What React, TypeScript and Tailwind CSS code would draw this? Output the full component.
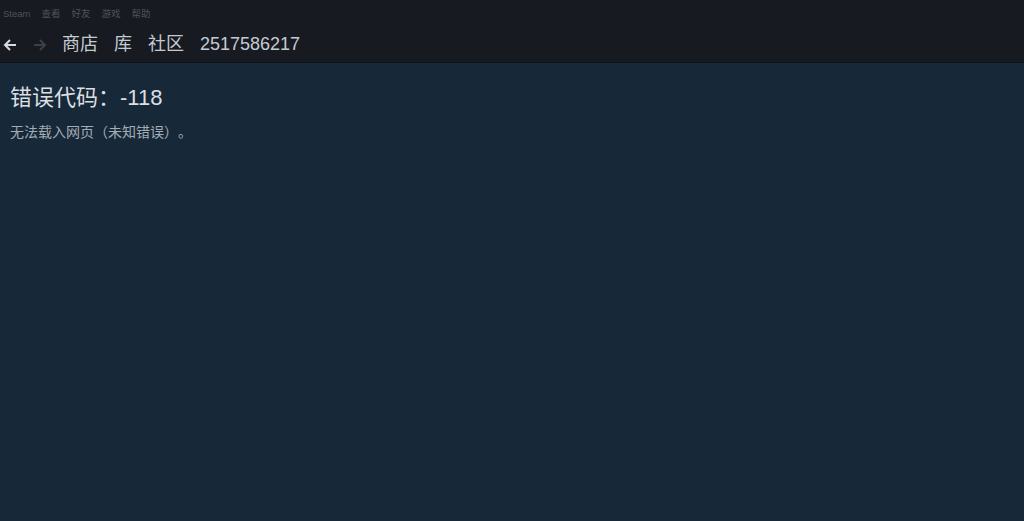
const cjk = "font-['Arial','Liberation_Sans','Noto_Sans_CJK_SC',sans-serif]"

const menu = ["Steam", "查看", "好友", "游戏", "帮助"]
const tabs = ["商店", "库", "社区", "2517586217"]

function Arrow({ dir, className }: { dir: "left" | "right"; className?: string }) {
  return (
    <svg width="14" height="14" viewBox="0 0 14 14" className={className}>
      {dir === "left" ? (
        <path d="M13 7H2M7 2L2 7l5 5" fill="none" stroke="currentColor" strokeWidth="2" />
      ) : (
        <path d="M1 7h11M7 2l5 5-5 5" fill="none" stroke="currentColor" strokeWidth="2" />
      )}
    </svg>
  )
}

// full-width punctuation box, the fallback font renders it half width
function Punct({ ch, align }: { ch: string; align: "left" | "right" | "center" }) {
  const a = align === "left" ? "text-left" : align === "right" ? "text-right" : "text-center"
  return <span className={`inline-block w-[1em] ${a}`}>{ch}</span>
}

export default function App() {
  return (
    <div className={`h-[521px] w-[1024px] bg-[#172839] ${cjk} flex flex-col`}>
      <header className="h-[63px] bg-[#171a21] border-b border-[#10131a] flex flex-col">
        <div className="flex h-[27px] items-center gap-[11px] px-[3px] pt-[1px] text-[9.5px] text-[#4f5358]">
          {menu.map((m) => (
            <span key={m}>{m}</span>
          ))}
        </div>
        <div className="flex items-center h-[35px]">
          <Arrow dir="left" className="ml-[3px] text-[#d8dadc]" />
          <Arrow dir="right" className="ml-[16px] text-[#3d4046]" />
          <nav className="ml-[15px] flex gap-[16px] text-[18px] text-[#c5cbd2]">
            {tabs.map((t) => (
              <span key={t}>{t}</span>
            ))}
          </nav>
        </div>
      </header>
      <main className="px-[10px] pt-[21px]">
        <h1 className="text-[22px] leading-[28px] text-[#dcdfe2]">
          错误代码<Punct ch="：" align="center" />-118
        </h1>
        <p className="mt-[10px] text-[14px] text-[#a4acb4]">
          无法载入网页<Punct ch="（" align="right" />未知错误<Punct ch="）" align="left" />
          <Punct ch="。" align="left" />
        </p>
      </main>
    </div>
  )
}
